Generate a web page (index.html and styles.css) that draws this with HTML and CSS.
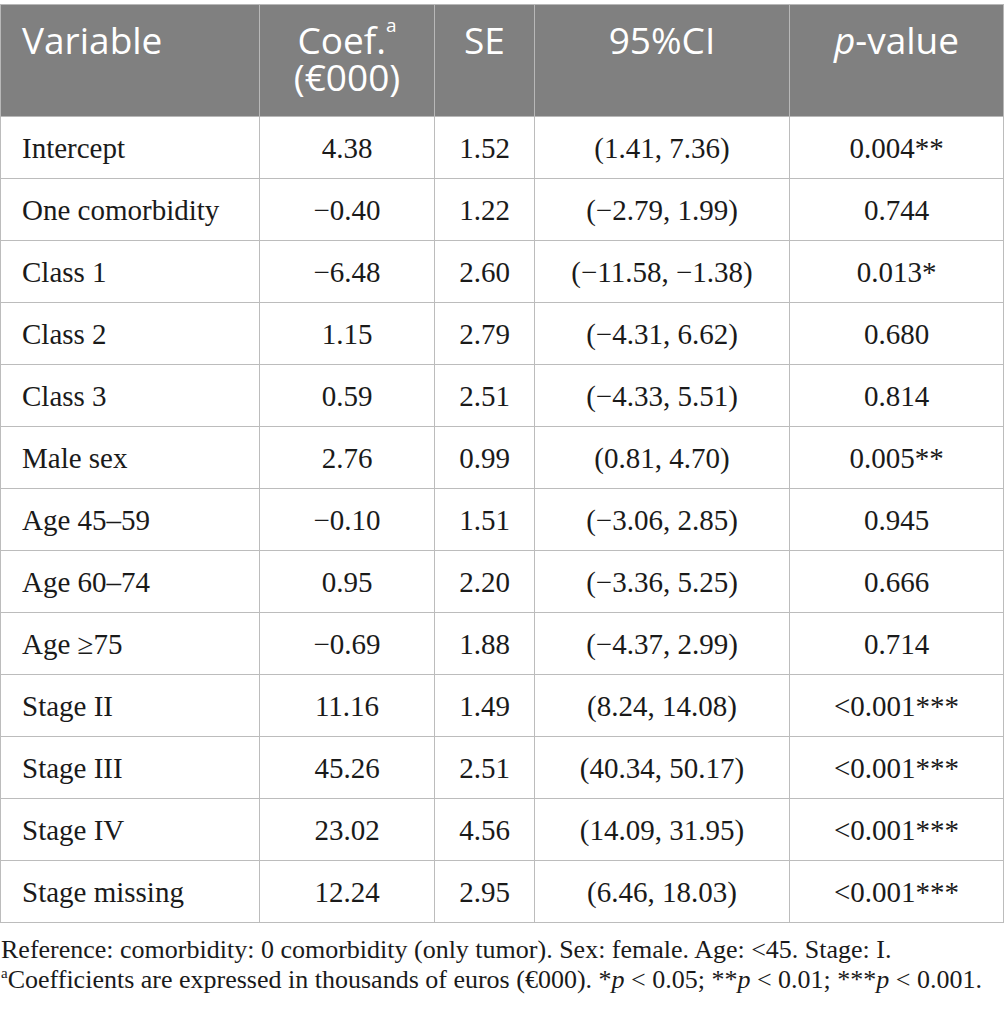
FILE: index.html
```html
<!DOCTYPE html>
<html>
<head>
<meta charset="utf-8">
<link rel="stylesheet" href="styles.css">
</head>
<body>
<div class="page">
<table class="tbl">
<colgroup>
<col class="c1"><col class="c2"><col class="c3"><col class="c4"><col class="c5">
</colgroup>
<thead>
<tr>
<th class="left">Variable</th>
<th>Coef.<sup class="hsup">a</sup><br>(€000)</th>
<th>SE</th>
<th>95%CI</th>
<th><i>p</i>-value</th>
</tr>
</thead>
<tbody>
<tr><td class="left">Intercept</td><td>4.38</td><td>1.52</td><td>(1.41, 7.36)</td><td>0.004**</td></tr>
<tr><td class="left">One comorbidity</td><td>−0.40</td><td>1.22</td><td>(−2.79, 1.99)</td><td>0.744</td></tr>
<tr><td class="left">Class 1</td><td>−6.48</td><td>2.60</td><td>(−11.58, −1.38)</td><td>0.013*</td></tr>
<tr><td class="left">Class 2</td><td>1.15</td><td>2.79</td><td>(−4.31, 6.62)</td><td>0.680</td></tr>
<tr><td class="left">Class 3</td><td>0.59</td><td>2.51</td><td>(−4.33, 5.51)</td><td>0.814</td></tr>
<tr><td class="left">Male sex</td><td>2.76</td><td>0.99</td><td>(0.81, 4.70)</td><td>0.005**</td></tr>
<tr><td class="left">Age 45–59</td><td>−0.10</td><td>1.51</td><td>(−3.06, 2.85)</td><td>0.945</td></tr>
<tr><td class="left">Age 60–74</td><td>0.95</td><td>2.20</td><td>(−3.36, 5.25)</td><td>0.666</td></tr>
<tr><td class="left">Age ≥75</td><td>−0.69</td><td>1.88</td><td>(−4.37, 2.99)</td><td>0.714</td></tr>
<tr><td class="left">Stage II</td><td>11.16</td><td>1.49</td><td>(8.24, 14.08)</td><td>&lt;0.001***</td></tr>
<tr><td class="left">Stage III</td><td>45.26</td><td>2.51</td><td>(40.34, 50.17)</td><td>&lt;0.001***</td></tr>
<tr><td class="left">Stage IV</td><td>23.02</td><td>4.56</td><td>(14.09, 31.95)</td><td>&lt;0.001***</td></tr>
<tr><td class="left">Stage missing</td><td>12.24</td><td>2.95</td><td>(6.46, 18.03)</td><td>&lt;0.001***</td></tr>
</tbody>
</table>
<div class="notes">
<p>Reference: comorbidity: 0 comorbidity (only tumor). Sex: female. Age: &lt;45. Stage: I.</p>
<p><sup class="fsup">a</sup>Coefficients are expressed in thousands of euros (€000). *<i>p</i> &lt; 0.05; **<i>p</i> &lt; 0.01; ***<i>p</i> &lt; 0.001.</p>
</div>
</div>
</body>
</html>
```

FILE: styles.css
```css
html, body {
  margin: 0;
  padding: 0;
  background: #ffffff;
}
.page {
  padding-top: 4px;
  width: 1004px;
}
.tbl {
  width: 1003px;
  border-collapse: collapse;
  table-layout: fixed;
}
.c1 { width: 259px; }
.c2 { width: 175px; }
.c3 { width: 100px; }
.c4 { width: 255px; }
.c5 { width: 214px; }
.tbl th {
  background: #808080;
  color: #ffffff;
  font-family: "Open Sans", sans-serif;
  font-weight: 400;
  font-size: 37px;
  line-height: 37px;
  text-align: center;
  vertical-align: top;
  padding: 16px 8px 21px 8px;
  border: 1px solid #b8b8b8;
  height: 74px;
}
.tbl th.left {
  text-align: left;
  padding-left: 21px;
}
.hsup {
  font-size: 19px;
  vertical-align: 0;
  position: relative;
  top: -22px;
  line-height: 0;
}
.tbl td {
  font-family: "Liberation Serif", "Times New Roman", serif;
  font-size: 29px;
  color: #1a1a1a;
  text-align: center;
  vertical-align: middle;
  height: 61px;
  padding: 0 8px;
  border: 1px solid #bcbcbc;
  line-height: 30px;
}
.tbl td.left {
  text-align: left;
  padding-left: 21px;
}
.notes {
  margin-top: 12px;
  font-family: "Liberation Serif", "Times New Roman", serif;
  font-size: 26px;
  line-height: 29.5px;
  color: #1a1a1a;
  padding-left: 1px;
  white-space: nowrap;
}
.notes p {
  margin: 0;
}
.fsup {
  font-size: 15px;
  vertical-align: 0;
  position: relative;
  top: -10px;
  line-height: 0;
}
```
